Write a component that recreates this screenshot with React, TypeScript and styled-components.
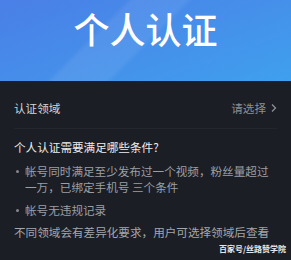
import React from "react";
import styled, { createGlobalStyle } from "styled-components";

const GlobalStyle = createGlobalStyle`
  html, body {
    margin: 0;
    padding: 0;
    background: #1b1e25;
  }
  body {
    font-family: "Noto Sans CJK SC", "Noto Sans", sans-serif;
  }
`;

const Page = styled.div`
  width: 291px;
  height: 260px;
  background: #1b1e25;
  overflow: hidden;
`;

const Banner = styled.div`
  height: 81px;
  display: flex;
  justify-content: center;
  align-items: flex-start;
  padding-top: 10px;
  box-sizing: border-box;
  background:
    linear-gradient(
      135deg,
      rgba(255, 255, 255, 0) 0%,
      rgba(255, 255, 255, 0) 34%,
      rgba(255, 255, 255, 0.07) 36%,
      rgba(255, 255, 255, 0.07) 50%,
      rgba(255, 255, 255, 0) 52%
    ),
    linear-gradient(160deg, #4a7fe7 0%, #4590ea 55%, #3fa0ee 100%);
`;

const Title = styled.h1`
  margin: 0;
  font-size: 36px;
  line-height: 36px;
  font-weight: 500;
  color: #ffffff;
`;

const Body = styled.div`
  padding: 0 14px;
`;

const FieldRow = styled.div`
  display: flex;
  justify-content: space-between;
  align-items: center;
  padding: 19px 0 12px;
  border-bottom: 1px solid #23262e;
`;

const Label = styled.span`
  font-size: 11.6px;
  line-height: 16px;
  color: #d3d5d9;
`;

const Picker = styled.span`
  display: flex;
  align-items: center;
  gap: 5px;
  font-size: 11.6px;
  line-height: 16px;
  color: #8c8f96;
`;

const Heading = styled.h2`
  margin: 10px 0 0;
  font-size: 11.6px;
  line-height: 16px;
  font-weight: 400;
  color: #eceef0;
`;

const List = styled.ul`
  list-style: none;
  margin: 8px 0 0;
  padding: 0;
  display: flex;
  flex-direction: column;
  gap: 7px;
`;

const Item = styled.li`
  display: flex;
  align-items: flex-start;
  font-size: 11.6px;
  line-height: 16px;
  color: #9c9ea4;
`;

const Dot = styled.span`
  flex: none;
  width: 3px;
  height: 3px;
  margin: 7px 6px 0 2px;
  border-radius: 50%;
  background: #85878d;
`;

const Note = styled.p`
  margin: 6px 0 0;
  font-size: 11.6px;
  line-height: 16px;
  color: #a4a6ab;
  white-space: nowrap;
`;

const Watermark = styled.div`
  text-align: right;
  padding: 3px 5px 0 0;
  font-size: 8px;
  line-height: 12px;
  font-weight: 700;
  color: #e8e8ea;
  white-space: nowrap;
`;

const Chevron = () => (
  <svg width="6" height="10" viewBox="0 0 6 10">
    <polyline
      points="1,1.5 4.5,5 1,8.5"
      fill="none"
      stroke="#8c8f96"
      strokeWidth="1.3"
    />
  </svg>
);

export default function App() {
  return (
    <Page>
      <GlobalStyle />
      <Banner>
        <Title>个人认证</Title>
      </Banner>
      <Body>
        <FieldRow>
          <Label>认证领域</Label>
          <Picker>
            请选择
            <Chevron />
          </Picker>
        </FieldRow>
        <Heading>个人认证需要满足哪些条件?</Heading>
        <List>
          <Item>
            <Dot />
            <span>帐号同时满足至少发布过一个视频，粉丝量超过一万，已绑定手机号 三个条件</span>
          </Item>
          <Item>
            <Dot />
            <span>帐号无违规记录</span>
          </Item>
        </List>
        <Note>不同领域会有差异化要求，用户可选择领域后查看</Note>
      </Body>
      <Watermark>百家号/丝路赞学院</Watermark>
    </Page>
  );
}
